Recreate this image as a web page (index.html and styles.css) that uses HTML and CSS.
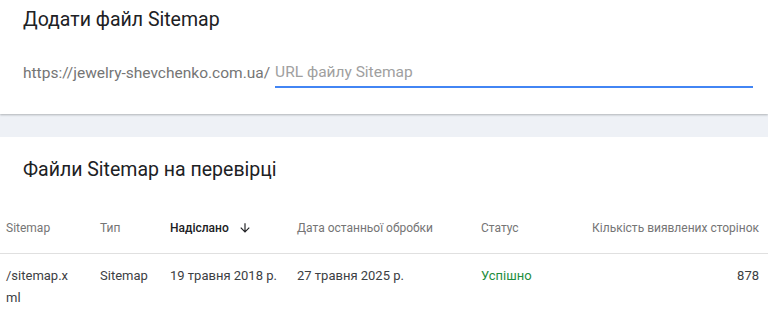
FILE: index.html
```html
<!DOCTYPE html>
<html lang="uk">
<head>
  <meta charset="UTF-8" />
  <meta name="viewport" content="width=device-width, initial-scale=1.0" />
  <title>Sitemap</title>
  <link rel="stylesheet" href="styles.css">
</head>
<body>
  <div class="card add-card">
    <h2 class="card-title">Додати файл Sitemap</h2>
    <div class="url-row">
      <span class="url-prefix">https://jewelry-shevchenko.com.ua/</span>
      <input type="text" class="url-input" placeholder="URL файлу Sitemap">
    </div>
  </div>

  <div class="card list-card">
    <h2 class="card-title list-title">Файли Sitemap на перевірці</h2>
    <table class="sitemaps">
      <thead>
        <tr>
          <th class="col-name">Sitemap</th>
          <th class="col-type">Тип</th>
          <th class="col-sent sorted">Надіслано <span class="sort-arrow">
            <svg width="14" height="14" viewBox="0 0 24 24"><path d="M20 12l-1.41-1.41L13 16.17V4h-2v12.17l-5.58-5.59L4 12l8 8 8-8z" fill="#202124"/></svg>
          </span></th>
          <th class="col-date">Дата останньої обробки</th>
          <th class="col-status">Статус</th>
          <th class="col-count">Кількість виявлених сторінок</th>
        </tr>
      </thead>
      <tbody>
        <tr>
          <td class="col-name">/sitemap.xml</td>
          <td class="col-type">Sitemap</td>
          <td class="col-sent">19 травня 2018 р.</td>
          <td class="col-date">27 травня 2025 р.</td>
          <td class="col-status ok">Успішно</td>
          <td class="col-count">878</td>
        </tr>
      </tbody>
    </table>
  </div>
</body>
</html>
```

FILE: styles.css
```css
body {
  font-family: Roboto, "Noto Sans", sans-serif;
  margin: 0;
  padding: 0;
  background-color: #eef1f6;
  color: #202124;
}

.card {
  background-color: #fff;
}

.add-card {
  height: 114px;
  box-shadow: 0 1px 2px rgba(60, 64, 67, 0.35);
  margin-bottom: 23px;
  padding: 0 15px 0 23px;
  box-sizing: border-box;
}

.card-title {
  margin: 0;
  font-weight: 400;
  font-size: 19.5px;
  line-height: 24px;
  padding-top: 8px;
}

.url-row {
  display: flex;
  align-items: flex-end;
  margin-top: 30px;
}

.url-prefix {
  font-size: 15.5px;
  line-height: 20px;
  color: #757575;
  padding-bottom: 5px;
  margin-right: 5px;
}

.url-input {
  flex: 1;
  border: none;
  border-bottom: 2px solid #4285f4;
  outline: none;
  font-family: inherit;
  font-size: 15.5px;
  line-height: 20px;
  padding: 0 0 4px 0;
  color: #202124;
}

.url-input::placeholder {
  color: #a0a0a0;
}

.list-card {
  min-height: 184px;
}

.list-title {
  padding: 21px 0 0 23px;
}

.sitemaps {
  width: 100%;
  border-collapse: collapse;
  margin-top: 30px;
}

.sitemaps th {
  font-size: 12px;
  font-weight: 400;
  color: #757575;
  text-align: left;
  height: 32px;
  padding: 0;
  vertical-align: top;
  padding-top: 9px;
  border-bottom: 1px solid #e0e0e0;
}

.sitemaps th.sorted {
  color: #202124;
  font-weight: 500;
}

.sort-arrow {
  display: inline-block;
  vertical-align: -3px;
  margin-left: 6px;
}

.sitemaps td {
  font-size: 13px;
  line-height: 22px;
  padding: 11px 0 0 0;
  vertical-align: top;
  color: #3c4043;
}

.col-name { width: 94px; padding-left: 6px !important; }
.col-type { width: 70px; }
.col-sent { width: 127px; }
.col-date { width: 184px; }
.col-status { width: 100px; }
.col-count { text-align: right !important; padding-right: 9px !important; }

.sitemaps td.col-name {
  word-break: break-all;
  width: 66px;
  max-width: 66px;
  padding-right: 28px;
}

.ok {
  color: #1e8e3e !important;
}
```
